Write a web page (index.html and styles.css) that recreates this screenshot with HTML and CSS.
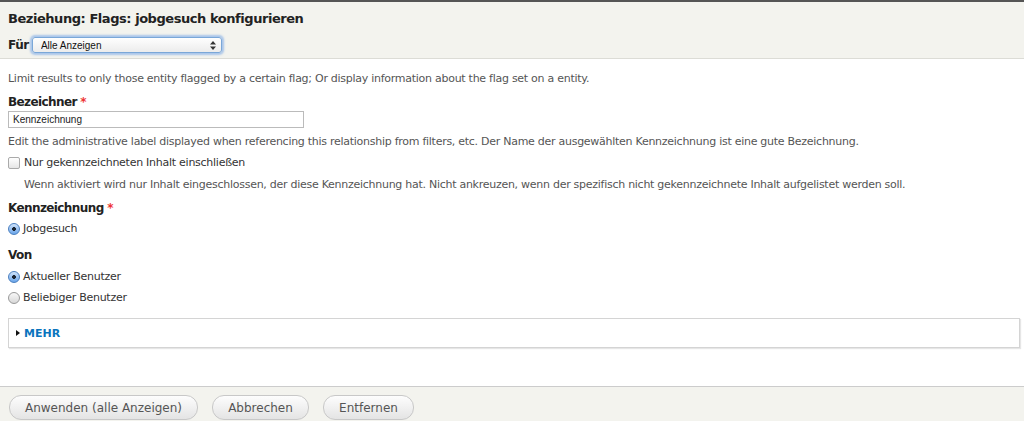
FILE: index.html
```html
<!DOCTYPE html>
<html lang="de">
<head>
<meta charset="utf-8">
<title>Beziehung: Flags: jobgesuch konfigurieren</title>
<link rel="stylesheet" href="styles.css">
</head>
<body>
<div class="header">
  <h1 class="title">Beziehung: Flags: jobgesuch konfigurieren</h1>
  <div class="for-row">
    <label class="for-label" for="for">Für</label>
    <span class="select-wrap">
      <select id="for" class="select"><option>Alle Anzeigen</option></select>
      <svg class="select-arrows" width="6" height="9" viewBox="0 0 6 9"><path d="M3 0 L6 3.5 H0 Z M3 9 L6 5.5 H0 Z" fill="#333"/></svg>
    </span>
  </div>
</div>
<div class="content">
  <div class="desc">Limit results to only those entity flagged by a certain flag; Or display information about the flag set on a entity.</div>
  <div class="field-label l1">Bezeichner <span class="req">*</span></div>
  <input class="text-input" type="text" value="Kennzeichnung">
  <div class="help">Edit the administrative label displayed when referencing this relationship from filters, etc. Der Name der ausgewählten Kennzeichnung ist eine gute Bezeichnung.</div>
  <label class="check-row"><input type="checkbox" class="checkbox"><span>Nur gekennzeichneten Inhalt einschließen</span></label>
  <div class="help indent">Wenn aktiviert wird nur Inhalt eingeschlossen, der diese Kennzeichnung hat. Nicht ankreuzen, wenn der spezifisch nicht gekennzeichnete Inhalt aufgelistet werden soll.</div>
  <div class="field-label l2">Kennzeichnung <span class="req">*</span></div>
  <label class="radio-row r0"><input type="radio" class="radio" name="flag" checked><span>Jobgesuch</span></label>
  <div class="field-label l3">Von</div>
  <label class="radio-row r1"><input type="radio" class="radio" name="user" checked><span>Aktueller Benutzer</span></label>
  <label class="radio-row r2"><input type="radio" class="radio" name="user"><span>Beliebiger Benutzer</span></label>
  <div class="fieldset">
    <span class="tri"></span><span class="more">MEHR</span>
  </div>
</div>
<div class="footer">
  <button class="btn b1">Anwenden (alle Anzeigen)</button>
  <button class="btn b2">Abbrechen</button>
  <button class="btn b3">Entfernen</button>
</div>
</body>
</html>
```
FILE: styles.css
```css
html, body {
  margin: 0;
  padding: 0;
  background: #fff;
  font-family: "DejaVu Sans", Verdana, sans-serif;
  color: #333;
  font-size: 11px;
}
.header {
  border-top: 2px solid #555;
  background: #f3f3ee;
  border-bottom: 1px solid #dcdcd6;
  padding: 8px 8px 0 8px;
  height: 48px;
}
.title {
  margin: 0;
  font-size: 13px;
  line-height: 17px;
  font-weight: bold;
  color: #222;
  letter-spacing: -0.45px;
}
.for-row {
  display: flex;
  align-items: center;
  margin-top: 10px;
  gap: 3px;
}
.for-label {
  font-weight: bold;
  font-size: 12px;
  color: #222;
  letter-spacing: -0.4px;
}
.select-wrap {
  position: relative;
  display: inline-block;
}
.select {
  appearance: none;
  -webkit-appearance: none;
  width: 190px;
  height: 16px;
  margin: 0;
  padding: 0 0 0 8px;
  border: 1px solid #7aa7d8;
  border-radius: 3px;
  background: linear-gradient(#fefefe, #ececec);
  box-shadow: 0 0 2px 2px rgba(110,160,230,0.55);
  font-family: "Liberation Sans", Arial, sans-serif;
  font-size: 10px;
  color: #111;
}
.select-arrows {
  position: absolute;
  right: 6px;
  top: 4px;
}
.content {
  padding: 12px 4px 0 8px;
  height: 315px;
}
.desc, .help {
  line-height: 16px;
  color: #555;
  white-space: nowrap;
  letter-spacing: -0.27px;
}
.field-label {
  font-weight: bold;
  font-size: 12px;
  line-height: 16px;
  color: #222;
  letter-spacing: -0.6px;
}
.req { color: #e33; }
.l1 { margin-top: 7px; }
.text-input {
  display: block;
  box-sizing: border-box;
  width: 296px;
  height: 17px;
  margin: 1px 0 0 0;
  padding: 0 4px;
  border: 1px solid #bbb;
  font-family: "Liberation Sans", Arial, sans-serif;
  font-size: 10px;
  color: #222;
}
.help { margin-top: 6px; }
.check-row, .radio-row {
  display: flex;
  align-items: center;
  line-height: 16px;
  color: #333;
  gap: 3px;
  letter-spacing: -0.26px;
}
.check-row { margin-top: 5px; gap: 4px; }
.indent { margin-top: 6px; padding-left: 16px; }
.l2 { margin-top: 7px; }
.l3 { margin-top: 10px; }
.r0 { margin-top: 5px; }
.r1 { margin-top: 6px; }
.r2 { margin-top: 5px; }
.checkbox {
  appearance: none;
  -webkit-appearance: none;
  width: 12px;
  height: 12px;
  margin: 0;
  border: 1px solid #aaa;
  border-radius: 2px;
  background: linear-gradient(#fff, #e6e6e6);
}
.radio {
  appearance: none;
  -webkit-appearance: none;
  width: 12px;
  height: 12px;
  margin: 0;
  border: 1px solid #999;
  border-radius: 50%;
  background: linear-gradient(#f8f8f8, #d8d8d8);
}
.radio:checked {
  border-color: #4a7fc0;
  background: radial-gradient(circle, #1a2433 0 1.6px, transparent 2.2px), linear-gradient(#cfe3fb, #6aa5ea);
}
.fieldset {
  margin-top: 12px;
  height: 28px;
  border: 1px solid #d4d4d4;
  box-shadow: 1px 1px 1px #e6e6e6;
  display: flex;
  align-items: center;
  padding-left: 7px;
}
.tri {
  width: 0;
  height: 0;
  border-left: 4px solid #111;
  border-top: 3px solid transparent;
  border-bottom: 3px solid transparent;
  margin-right: 4px;
}
.more {
  color: #0a74bd;
  font-weight: bold;
  font-size: 11px;
}
.footer {
  border-top: 1px solid #ccc;
  background: #f3f3ee;
  height: 35px;
  padding: 8px 0 0 9px;
  box-sizing: border-box;
  display: flex;
  gap: 14px;
}
.btn {
  height: 25px;
  border: 1px solid #c8c8c8;
  border-radius: 12px;
  background: linear-gradient(#fdfdfd, #e4e4e4);
  font-family: "DejaVu Sans", Verdana, sans-serif;
  font-size: 12px;
  color: #555;
  padding: 0 14px;
}
.b1 { width: 189px; }
.b2 { width: 97px; }
.b3 { width: 91px; }
```
